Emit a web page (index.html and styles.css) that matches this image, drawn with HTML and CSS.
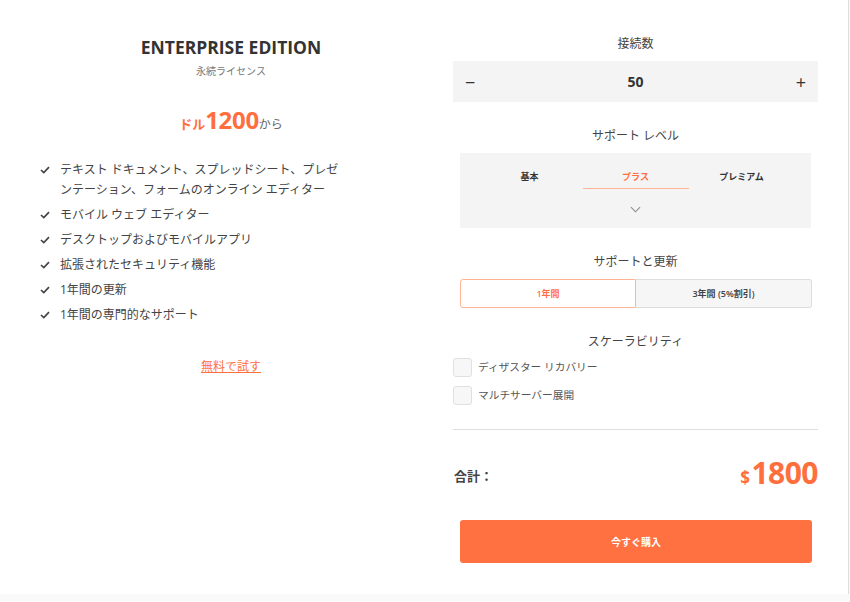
FILE: index.html
```html
<!DOCTYPE html>
<html lang="ja">
<head>
  <meta charset="UTF-8">
  <title>Enterprise Edition</title>
  <meta name="viewport" content="width=device-width, initial-scale=1.0">
  <link rel="stylesheet" href="styles.css">
</head>
<body>
  <div class="card">
    <section class="plan">
      <h2 class="plan-title">ENTERPRISE EDITION</h2>
      <p class="license">永続ライセンス</p>
      <p class="price"><span class="cur">ドル</span><span class="amount">1200</span><span class="from">から</span></p>
      <ul class="features">
        <li><svg class="check" viewBox="0 0 10 8"><polyline points="1,4 3.8,6.6 9,1.2"/></svg>テキスト ドキュメント、スプレッドシート、プレゼンテーション、フォームのオンライン エディター</li>
        <li><svg class="check" viewBox="0 0 10 8"><polyline points="1,4 3.8,6.6 9,1.2"/></svg>モバイル ウェブ エディター</li>
        <li><svg class="check" viewBox="0 0 10 8"><polyline points="1,4 3.8,6.6 9,1.2"/></svg>デスクトップおよびモバイルアプリ</li>
        <li><svg class="check" viewBox="0 0 10 8"><polyline points="1,4 3.8,6.6 9,1.2"/></svg>拡張されたセキュリティ機能</li>
        <li><svg class="check" viewBox="0 0 10 8"><polyline points="1,4 3.8,6.6 9,1.2"/></svg>1年間の更新</li>
        <li><svg class="check" viewBox="0 0 10 8"><polyline points="1,4 3.8,6.6 9,1.2"/></svg>1年間の専門的なサポート</li>
      </ul>
      <a class="trial" href="#">無料で試す</a>
    </section>

    <section class="config">
      <h3 class="opt-label">接続数</h3>
      <div class="stepper">
        <button class="step">−</button>
        <span class="count">50</span>
        <button class="step">+</button>
      </div>

      <h3 class="opt-label gap">サポート レベル</h3>
      <div class="levels">
        <div class="tabs">
          <span class="tab">基本</span>
          <span class="tab active">プラス</span>
          <span class="tab">プレミアム</span>
        </div>
        <svg class="chevron" viewBox="0 0 12 7"><polyline points="1,1 6,6 11,1"/></svg>
      </div>

      <h3 class="opt-label gap">サポートと更新</h3>
      <div class="terms">
        <span class="term active">1年間</span>
        <span class="term">3年間 (5%割引)</span>
      </div>

      <h3 class="opt-label gap">スケーラビリティ</h3>
      <div class="extras">
        <label class="extra"><span class="box"></span>ディザスター リカバリー</label>
        <label class="extra"><span class="box"></span>マルチサーバー展開</label>
      </div>

      <div class="total">
        <span class="total-label">合計：</span>
        <span class="total-price"><span class="dollar">$</span>1800</span>
      </div>
      <button class="buy">今すぐ購入</button>
    </section>
  </div>
</body>
</html>
```

FILE: styles.css
```css
* { box-sizing: border-box; }
body { margin: 0; background: #fafafa; font-family: "Open Sans", "Noto Sans CJK JP", sans-serif; color: #444; }
.card { width: 849px; height: 594px; background: #fff; border-right: 1px solid #dedede; display: grid; grid-template-columns: 382px 365px; column-gap: 31px; padding-left: 40px; }

/* left column */
.plan { display: flex; flex-direction: column; align-items: center; }
.plan-title { margin: 36px 0 0; font-size: 17.5px; line-height: 22px; font-weight: 700; color: #333; }
.license { margin: 6px 0 0; font-size: 10px; line-height: 14px; color: #777; }
.price { margin: 27px 0 0; line-height: 30px; color: #ff6f3d; font-weight: 700; }
.price .cur { font-size: 13px; }
.price .amount { font-size: 24px; letter-spacing: -0.3px; }
.price .from { font-size: 12px; font-weight: 400; color: #666; }
.features { align-self: flex-start; list-style: none; margin: 20px 0 0; padding: 0; width: 310px; display: flex; flex-direction: column; gap: 5.5px; }
.features li { position: relative; padding-left: 20px; font-size: 12px; line-height: 19.5px; color: #444; }
.check { position: absolute; left: 0; top: 6px; width: 10px; height: 8px; fill: none; stroke: #444; stroke-width: 1.7; }
.trial { margin-top: 34px; font-size: 12px; line-height: 18px; color: #ff6f3d; text-decoration: underline; }

/* right column */
.config { display: flex; flex-direction: column; }
.opt-label { margin: 35px 0 8px; font-size: 12px; line-height: 18px; font-weight: 400; color: #444; text-align: center; }
.opt-label.gap { margin-top: 25px; }
.stepper { height: 41px; background: #f4f4f4; display: flex; align-items: center; justify-content: space-between; padding: 0 8px; }
.step { border: none; background: none; font-family: "Open Sans", sans-serif; font-size: 18px; color: #333; padding: 0 4px; line-height: 1; }
.count { font-size: 14px; font-weight: 700; color: #333; }
.levels { margin: 0 7px; height: 75px; background: #f4f4f4; display: flex; flex-direction: column; align-items: center; padding-top: 18px; }
.tabs { display: grid; grid-template-columns: repeat(3, 106px); }
.tab { text-align: center; font-size: 9px; line-height: 12px; font-weight: 700; color: #333; padding-bottom: 5px; border-bottom: 1px solid transparent; }
.tab.active { color: #ff6f3d; border-bottom-color: #ffb495; }
.chevron { margin-top: 17px; width: 11px; height: 7px; fill: none; stroke: #888; stroke-width: 1.1; }
.terms { margin: 0 6px 0 7px; height: 29px; display: grid; grid-template-columns: 1fr 1fr; }
.term { display: flex; align-items: center; justify-content: center; font-size: 9px; font-weight: 600; color: #444; background: #f6f6f6; border: 1px solid #ddd; border-left: none; border-radius: 0 3px 3px 0; }
.term.active { color: #ff6f3d; background: #fff; border: 1px solid #ffb495; border-radius: 3px 0 0 3px; }
.extras { margin-top: -1px; display: flex; flex-direction: column; gap: 9px; }
.extra { display: flex; align-items: center; gap: 6px; font-size: 10.7px; line-height: 19px; color: #555; }
.box { width: 19px; height: 19px; border: 1px solid #e0e0e0; border-radius: 3px; background: #f7f7f7; }
.total { margin-top: 24px; border-top: 1px solid #ddd; padding-top: 26px; display: flex; align-items: center; justify-content: space-between; height: 66px; }
.total-label { font-size: 13px; font-weight: 700; color: #444; padding-left: 1px; }
.total-price { font-size: 30px; line-height: 40px; font-weight: 700; color: #ff6f3d; letter-spacing: -0.5px; }
.dollar { font-size: 17px; margin-right: 2px; }
.buy { margin: 25px 6px 0 7px; height: 43px; border: none; border-radius: 3px; background: #ff7140; color: #fff; font-family: "Noto Sans CJK JP", sans-serif; font-size: 10px; font-weight: 700; }
```
